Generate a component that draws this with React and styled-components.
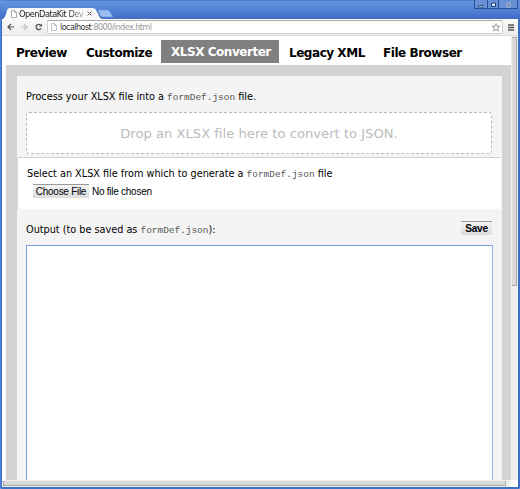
import React from 'react';
import styled, { createGlobalStyle } from 'styled-components';

const Global = createGlobalStyle`
  * { box-sizing: border-box; }
  body { margin: 0; overflow: hidden; font-family: "DejaVu Sans", sans-serif; }
`;
const BrowserWindow = styled.div`
  width: 520px; height: 489px; display: flex; flex-direction: column;
  padding: 0 2px 2px; background: #3b6fc4;
  box-shadow: inset 1px 0 #4d84d4, inset -1px 0 #3d6dbd, inset 0 -1px #3974ca;
  border-radius: 2px; overflow: hidden;
`;
const TitleBar = styled.header`
  height: 19px; flex: none; display: flex; justify-content: space-between; margin: 0 -2px;
  background: linear-gradient(#4069ad 0, #6294e0 1px, #5c8ddc 5px, #3f6dc6 100%);
`;
const Tabs = styled.div`display: flex; align-items: flex-end; position: relative; width: 130px;`;
const TabShape = styled.svg`position: absolute; left: 0; top: 7px;`;
const TabLabel = styled.div`
  position: relative; display: flex; align-items: center; height: 11px; padding-left: 11px;
`;
const TabTitle = styled.span`
  width: 66px; margin-left: 2px; font: 9.2px/11px "DejaVu Sans Condensed", "DejaVu Sans", sans-serif;
  letter-spacing: -0.5px; white-space: nowrap; overflow: hidden; color: #222;
  mask-image: linear-gradient(90deg, #000 72%, #0004);
`;
const WindowControls = styled.div`
  display: flex; width: 44px; height: 9px; margin-right: 2px; border: 1px solid #294f91; border-top: 0;
  background: #6791d4;
`;
const Control = styled.div`
  width: ${p => p.$w}px; display: grid; place-items: center;
  & + & { border-left: 1px solid #294f91; }
`;
const Toolbar = styled.div`
  height: 17px; flex: none; display: flex; align-items: center; padding: 0 4px 0 5px;
  background: linear-gradient(#fafafa, #ededed); border-bottom: 1px solid #dcdcdc;
`;
const NavIcon = styled.svg`margin-right: ${p => p.$gap || 0}px; flex: none;`;
const AddressBar = styled.div`
  flex: 1; height: 14px; display: flex; align-items: center; padding: 0 1px 0 3px; margin-right: 5px;
  background: #fff; border: 1px solid #cecece; border-top-color: #aaa; border-radius: 2px;
`;
const Url = styled.span`
  flex: 1; margin-left: 3px; color: #999; font: 9px/12px "DejaVu Sans Condensed", "DejaVu Sans", sans-serif;
  letter-spacing: -0.57px; white-space: nowrap;
`;
const Host = styled.span`color: #333;`;
const Viewport = styled.div`
  flex: 1; min-height: 0; display: grid; grid-template-columns: 509px 7px; grid-template-rows: 1fr 7px; background: #fff;
`;
const Page = styled.div`min-height: 0; overflow: hidden; padding-left: 4px; display: flex; flex-direction: column;`;
const Nav = styled.nav`height: 29px; flex: none; display: flex; padding-top: 4px;`;
const NavItem = styled.a`
  height: 23px; padding: ${p => (p.$active ? '1px' : '2px')} 0 0 10px;
  width: ${p => p.$w}px; font-weight: bold; font-size: 12px; letter-spacing: -0.46px; line-height: 22px; white-space: nowrap;
  color: ${p => (p.$active ? '#fff' : '#000')}; background: ${p => (p.$active ? '#808080' : 'none')};
`;
const Frame = styled.div`flex: 1; min-height: 0; background: #d3d3d3; padding: 11px 9px 0 11px;`;
const Panel = styled.main`height: 100%; background: #f4f4f4; display: flex; flex-direction: column;`;
const Process = styled.section`height: 82px; flex: none; padding: 13px 10px 0 9px;`;
const Line = styled.p`
  margin: 0; height: 16px; font-size: 9.7px; line-height: 16px; color: #000; white-space: nowrap;
`;
const Code = styled.code`
  font: 9.45px/10px "Liberation Mono", monospace; color: #555;
`;
const DropZone = styled.div`
  height: 42px; margin-top: 7px; border: 1px dashed #b8b8b8; border-radius: 3px; background: #fff;
  text-align: center; font-size: 13.15px; line-height: 41px; color: #bbb; white-space: nowrap;
`;
const Select = styled.section`
  height: 51px; flex: none; margin: 0 1px 0; padding: 8px 0 0 9px; background: #fff; box-shadow: 0 -1px #d0d0d0, -1px 0 #d8d8d8;
`;
const FileRow = styled.div`
  display: flex; margin: 2px 0 0 6px; font: 10px/15px "Liberation Sans", sans-serif; letter-spacing: -0.26px;
  color: #000; white-space: nowrap;
`;
const Button = styled.button`
  width: ${p => p.$w}px; height: 14px; padding: 0; border: 0; border-top: 1px solid #999; color: #000;
  background: linear-gradient(#f4f4f4, #dcdcdc); white-space: nowrap; letter-spacing: -0.28px;
  font: ${p => (p.$bold ? 'bold 10.2px/13px' : '10px/13px')} "Liberation Sans", sans-serif;
`;
const FileName = styled.span`margin-left: 3px;`;
const OutputHead = styled.div`height: 36px; flex: none; display: flex; justify-content: space-between; padding: 12px 10px 0 9px;`;
const OutputLabel = styled(Line)`padding-top: 1px;`;
const Output = styled.textarea`
  flex: 1; margin: 0 9px 0 9px; border: 1px solid #7a9ddd; border-right-color: #8fb6ee; border-bottom: 0;
  background: #fff; resize: none; outline: 0;
`;
const VTrack = styled.div`background: #eee; padding: 1px 1px 0;`;
const VThumb = styled.div`height: 249px; background: #dadada; border: solid #aaa; border-width: 1px 1px 1px 0;`;
const HTrack = styled.div`background: #eee; padding: 1px 5px 1px 1px;`;
const HThumb = styled.div`height: 5px; background: #d8d8d8; border: 1px solid #aaa; border-top: 0;`;
const Corner = styled.div`background: #fff;`;

const PageIcon = ({ color = '#999' }) => (
  <svg width="6" height="8" viewBox="0 0 6 8" fill="#fff" stroke={color} strokeWidth=".8">
    <path d="M.5.5h3l2 2v5h-5zM3.5.5v2h2" />
  </svg>
);

const NAV = [
  ['Preview', 70], ['Customize', 85], ['XLSX Converter', 118], ['Legacy XML', 94], ['File Browser', 100],
];

export default function App() {
  return (
    <>
      <Global />
      <BrowserWindow>
        <TitleBar>
          <Tabs>
            <TabShape width="120" height="12" viewBox="0 0 120 12">
              <path d="M98 3h9q2 0 3 2l3 5h-10q-2 0-3-2z" fill="#9bbdf0" stroke="#6d98dd" strokeWidth=".7" />
              <path d="M3 12Q5 11 6 7L7 3Q8 1 10 1H92Q95 1 96 3L99 9Q100 12 103 12Z" fill="#fafafa" />
            </TabShape>
            <TabLabel>
              <PageIcon />
              <TabTitle>OpenDataKit Dev</TabTitle>
              <svg width="9" height="5" viewBox="0 0 9 5" stroke="#666"><path d="M2.5.5l4 4M6.5.5l-4 4" /></svg>
            </TabLabel>
          </Tabs>
          <WindowControls>
            <Control $w={12}><svg width="7" height="7"><path d="M1 4.5h5v1.5H1z" fill="#dce8fb" stroke="#234378" strokeWidth=".8" /></svg></Control>
            <Control $w={12}><svg width="7" height="7"><path d="M1.5 2h4v3.5h-4z" fill="#dce8fb" stroke="#234378" /></svg></Control>
            <Control $w={19}><svg width="7" height="7"><path d="M1.5 2l4 4M5.5 2l-4 4" stroke="#e8effb" strokeWidth="2" /><path d="M1.5 2l4 4M5.5 2l-4 4" stroke="#234378" /></svg></Control>
          </WindowControls>
        </TitleBar>
        <Toolbar>
          <NavIcon $gap={7} width="7" height="8" viewBox="0 0 7 8" fill="none" stroke="#555" strokeWidth="1.2"><path d="M7 4H1M4 1L1 4l3 3" /></NavIcon>
          <NavIcon $gap={7} width="7" height="8" viewBox="0 0 7 8" fill="none" stroke="#c5c5c5" strokeWidth="1.2"><path d="M0 4h6M3 1l3 3-3 3" /></NavIcon>
          <NavIcon $gap={5} width="7" height="8" viewBox="0 0 7 8" fill="none" stroke="#555" strokeWidth="1.3"><path d="M6 5.2A2.6 2.6 0 1 1 5.6 2.2" /><path d="M7 .5v3H4z" fill="#555" stroke="none" /></NavIcon>
          <AddressBar>
            <PageIcon color="#b5b5b5" />
            <Url><Host>localhost</Host>:8000/index.html</Url>
            <svg width="10" height="9" viewBox="0 0 9 9" fill="#fff" stroke="#888" strokeWidth=".8"><path d="M4.5.6l1 2.7h2.9L6.1 5.1l.9 3-2.5-1.7L2 8.1l.9-3L.6 3.3h2.9z" /></svg>
          </AddressBar>
          <svg width="6" height="7" viewBox="0 0 6 7" stroke="#555"><path d="M0 1h6M0 3.5h6M0 6h6" strokeWidth="1.4" /></svg>
        </Toolbar>
        <Viewport>
          <Page>
            <Nav>
              {NAV.map(([label, w]) => (
                <NavItem key={label} $w={w} $active={label === 'XLSX Converter'}>{label}</NavItem>
              ))}
            </Nav>
            <Frame>
              <Panel>
                <Process>
                  <Line>Process your XLSX file into a <Code>formDef.json</Code> file.</Line>
                  <DropZone>Drop an XLSX file here to convert to JSON.</DropZone>
                </Process>
                <Select>
                  <Line>Select an XLSX file from which to generate a <Code>formDef.json</Code> file</Line>
                  <FileRow><Button $w={56}>Choose File</Button><FileName>No file chosen</FileName></FileRow>
                </Select>
                <OutputHead>
                  <OutputLabel>Output (to be saved as <Code>formDef.json</Code>):</OutputLabel>
                  <Button $w={31} $bold>Save</Button>
                </OutputHead>
                <Output readOnly />
              </Panel>
            </Frame>
          </Page>
          <VTrack><VThumb /></VTrack>
          <HTrack><HThumb /></HTrack>
          <Corner />
        </Viewport>
      </BrowserWindow>
    </>
  );
}
